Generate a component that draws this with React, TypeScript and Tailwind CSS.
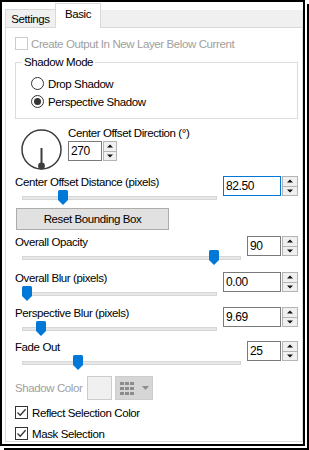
import React from "react";

const txt = "font-['Liberation_Sans',Arial,sans-serif] text-[11.5px] tracking-[-0.4px] leading-[14px] text-black";

const Check: React.FC<{ checked?: boolean; disabled?: boolean }> = ({ checked, disabled }) => (
    <span
        className={
            disabled
                ? "w-[13px] h-[13px] shrink-0 border border-[#cccccc] bg-white"
                : "w-[13px] h-[13px] shrink-0 border border-[#333333] bg-white flex items-center justify-center"
        }
    >
        {checked && (
            <svg width="11" height="11" viewBox="0 0 11 11">
                <path d="M1.5 5.5 L4.2 8.2 L9.6 2.2" stroke="#333333" strokeWidth="1.3" fill="none" />
            </svg>
        )}
    </span>
);

const Radio: React.FC<{ checked?: boolean; label: string }> = ({ checked, label }) => (
    <div className="flex items-center gap-[4px] h-[13px]">
        <span className="w-[13px] h-[13px] shrink-0 rounded-full border border-[#333333] bg-white flex items-center justify-center">
            {checked && <span className="w-[7px] h-[7px] rounded-full bg-[#333333]" />}
        </span>
        <span>{label}</span>
    </div>
);

const Arrow: React.FC<{ up?: boolean }> = ({ up }) => (
    <svg width="6" height="4" viewBox="0 0 6 4">
        <path d={up ? "M0 3.5 L3 0.5 L6 3.5Z" : "M0 0.5 L6 0.5 L3 3.5Z"} fill="#111111" />
    </svg>
);

const Spin: React.FC<{ value: string; inputClass: string; btnClass?: string; focus?: boolean; className?: string }> = ({
    value,
    inputClass,
    btnClass = "w-[16px]",
    focus,
    className = "",
}) => (
    <div className={"flex h-[20px] " + className}>
        <div
            className={
                (focus ? "border-[#0078d7] " : "border-[#7a7a7a] ") +
                "h-full border bg-white pl-[2px] flex items-center text-[12px] " +
                inputClass
            }
        >
            {value}
        </div>
        <div className={"ml-[1px] h-full flex flex-col border border-[#b4b4b4] " + btnClass}>
            <div className="flex-1 flex items-center justify-center bg-[#f0f0f0] border-b border-[#b4b4b4]">
                <Arrow up />
            </div>
            <div className="flex-1 flex items-center justify-center bg-[#f0f0f0]">
                <Arrow />
            </div>
        </div>
    </div>
);

const Thumb = () => (
    <svg width="10" height="15" viewBox="0 0 10 15">
        <path d="M1.5 0 H8.5 Q10 0 10 1.5 V10 L5 15 L0 10 V1.5 Q0 0 1.5 0Z" fill="#0078d7" />
    </svg>
);

const Section: React.FC<{
    label: string;
    value: string;
    wide?: boolean;
    thumbClass: string;
    className?: string;
    focus?: boolean;
}> = ({ label, value, wide, thumbClass, className = "", focus }) => (
    <div className={"flex " + className}>
        <div className="flex-1 flex flex-col">
            <div className="pl-[9px] h-[14px] whitespace-nowrap">{label}</div>
            <div className="mt-[1px] ml-[16px] mr-[6px] relative h-[16px] flex items-center">
                <div className="w-full h-[4px] bg-[#e7e7e7] border border-[#d6d6d6]" />
                <div className={"absolute top-0 " + thumbClass}>
                    <Thumb />
                </div>
            </div>
        </div>
        <Spin
            value={value}
            focus={focus}
            inputClass={wide ? "w-[34px]" : "w-[58px]"}
            className="mt-[1px] mr-[4px]"
        />
    </div>
);

export default function App() {
    return (
        <div className={"w-[309px] h-[450px] bg-white " + txt}>
            <div className="w-[305px] h-[446px] border-2 border-black bg-white shadow-[2px_2px_0_0_#ffffff,4px_4px_0_0_#000000] flex flex-col pl-[3px] pt-[1px]">
                {/* tabs */}
                <div className="flex items-end h-[24px]">
                    <div className="w-[50px] h-[18px] bg-[#f0f0f0] border-l border-t border-[#d9d9d9] flex items-center justify-center">
                        Settings
                    </div>
                    <div className="w-[46px] h-[25px] -mb-[1px] relative z-10 bg-white border-l border-t border-r border-[#d9d9d9] flex items-start justify-center pt-[3px]">
                        Basic
                    </div>
                    <div className="flex-1 h-[17px] bg-[#f0f0f0] border-r border-[#e3e3e3]" />
                </div>

                {/* panel */}
                <div className="w-[298px] h-[415px] border border-[#d9d9d9] bg-white flex flex-col">
                    <div className="mt-[9px] pl-[9px] h-[13px] flex items-center gap-[3px]">
                        <Check disabled />
                        <span className="text-[#a0a0a0] whitespace-nowrap">Create Output In New Layer Below Current</span>
                    </div>

                    <div className="mt-[12px] ml-[9px] mr-[4px] h-[57px] border border-[#dcdcdc] relative pt-[14px] pl-[15px] flex flex-col gap-[5px]">
                        <span className="absolute -top-[8px] left-[6px] px-[2px] bg-white">Shadow Mode</span>
                        <Radio label="Drop Shadow" />
                        <Radio checked label="Perspective Shadow" />
                    </div>

                    <div className="mt-[7px] ml-[15px] flex">
                        <svg width="41" height="41" viewBox="0 0 41 41" className="mt-[3px]">
                            <circle cx="20.5" cy="20.5" r="19.5" stroke="#3c3c3c" strokeWidth="1.5" fill="none" />
                            <line x1="20.5" y1="19" x2="20.5" y2="37" stroke="#3c3c3c" strokeWidth="2" />
                            <circle cx="20.5" cy="37" r="3.4" fill="#3c3c3c" />
                        </svg>
                        <div className="ml-[6px] flex flex-col">
                            <div className="h-[14px] whitespace-nowrap">Center Offset Direction (°)</div>
                            <Spin value="270" inputClass="w-[34px]" btnClass="w-[14px]" className="mt-[1px]" />
                        </div>
                    </div>

                    <Section className="mt-[5px]" label="Center Offset Distance (pixels)" value="82.50" focus thumbClass="left-[36px]" />

                    <div className="mt-[2px] ml-[10px] w-[153px] h-[22px] bg-[#e1e1e1] border border-[#adadad] flex items-center justify-center">
                        Reset Bounding Box
                    </div>

                    <Section className="mt-[5px]" label="Overall Opacity" value="90" wide thumbClass="left-[187px]" />
                    <Section className="mt-[5px]" label="Overall Blur (pixels)" value="0.00" thumbClass="left-0" />
                    <Section className="mt-[4px]" label="Perspective Blur (pixels)" value="9.69" thumbClass="left-[14px]" />
                    <Section className="mt-[3px]" label="Fade Out" value="25" wide thumbClass="left-[51px]" />

                    <div className="mt-[5px] h-[24px] flex items-center">
                        <span className="w-[81px] pl-[9px] text-[#a0a0a0] whitespace-nowrap">Shadow Color</span>
                        <div className="w-[25px] h-[24px] bg-[#f0f0f0] border border-[#cccccc]" />
                        <div className="ml-[3px] w-[38px] h-[24px] bg-[#d6d6d6] border border-[#cccccc] flex items-center pl-[4px] gap-[8px]">
                            <div className="grid grid-cols-3 gap-x-[1px] gap-y-[2px]">
                                {Array.from({ length: 9 }).map((_, i) => (
                                    <span key={i} className="w-[4px] h-[3px] bg-[#8c8c8c]" />
                                ))}
                            </div>
                            <svg width="7" height="4" viewBox="0 0 7 4">
                                <path d="M0 0 L7 0 L3.5 4Z" fill="#8c8c8c" />
                            </svg>
                        </div>
                    </div>

                    <div className="mt-[6px] pl-[9px] h-[13px] flex items-center gap-[4px]">
                        <Check checked />
                        <span>Reflect Selection Color</span>
                    </div>
                    <div className="mt-[8px] pl-[9px] h-[13px] flex items-center gap-[4px]">
                        <Check checked />
                        <span>Mask Selection</span>
                    </div>
                </div>
            </div>
        </div>
    );
}
